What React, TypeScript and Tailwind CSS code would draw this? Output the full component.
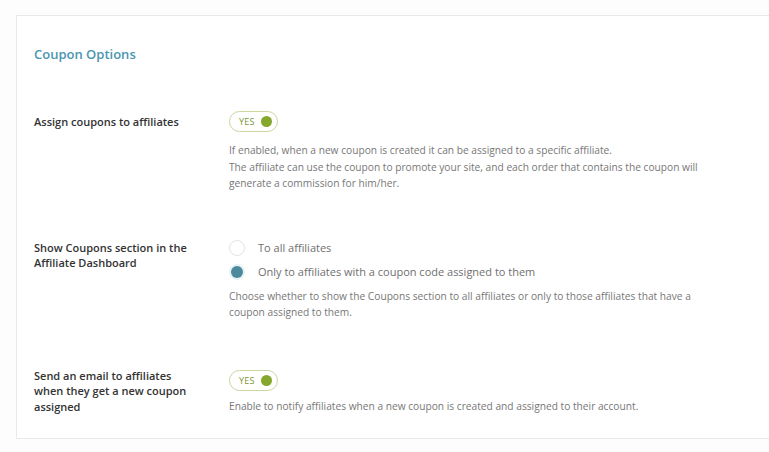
import React from "react";

function Toggle() {
  return (
    <div className="flex h-[21px] w-[49px] items-center justify-between rounded-full border border-[#c9d59f] bg-white pl-[9px] pr-[5px]">
      <span className="text-[9px] font-medium leading-none tracking-wide text-[#7f9538]">YES</span>
      <span className="h-[11px] w-[11px] rounded-full bg-[#84a72c]" />
    </div>
  );
}

function Radio({ checked, label }: { checked?: boolean; label: string }) {
  return (
    <div className="flex items-center gap-[13px]">
      {checked ? (
        <span className="flex h-[16px] w-[16px] items-center justify-center rounded-full bg-[#e8f1f3]">
          <span className="h-[12px] w-[12px] rounded-full bg-[#4b8a9d]" />
        </span>
      ) : (
        <span className="h-[16px] w-[16px] rounded-full border border-[#e3e3e3] bg-white" />
      )}
      <span className="text-[11px] leading-4 text-[#6f6f6f]">{label}</span>
    </div>
  );
}

function Row({
  label,
  children,
  className = "",
}: {
  label: React.ReactNode;
  children: React.ReactNode;
  className?: string;
}) {
  return (
    <div className={`flex ${className}`}>
      <div className="w-[195px] shrink-0 pr-4 text-[11px] font-semibold leading-[15.5px] text-[#333]">
        {label}
      </div>
      <div className="flex-1">{children}</div>
    </div>
  );
}

export default function App() {
  return (
    <div
      className="h-[452px] w-[769px] overflow-hidden bg-[#fdfdfd] pl-4 pt-[15px]"
      style={{ fontFamily: '"Open Sans", "Noto Sans", sans-serif' }}
    >
      <div className="h-[424px] border-y border-l border-[#e9e9e9] bg-white pl-[17px] pt-[28px]">
        <h2 className="text-[13px] font-semibold leading-5 text-[#4b95b0]">Coupon Options</h2>

        <Row label="Assign coupons to affiliates" className="mt-[50px]">
          <div className="-mt-[3px]">
            <Toggle />
          </div>
          <p className="mt-[10px] text-[10.2px] leading-[16.5px] text-[#777]">
            If enabled, when a new coupon is created it can be assigned to a specific affiliate.
            <br />
            The affiliate can use the coupon to promote your site, and each order that contains the coupon will
            <br />
            generate a commission for him/her.
          </p>
        </Row>

        <Row
          label={
            <>
              Show Coupons section in the
              <br />
              Affiliate Dashboard
            </>
          }
          className="mt-[48px]"
        >
          <div className="flex flex-col gap-2">
            <Radio label="To all affiliates" />
            <Radio checked label="Only to affiliates with a coupon code assigned to them" />
          </div>
          <p className="mt-[8px] text-[10.2px] leading-[16.5px] text-[#777]">
            Choose whether to show the Coupons section to all affiliates or only to those affiliates that have a
            <br />
            coupon assigned to them.
          </p>
        </Row>

        <Row
          label={
            <>
              Send an email to affiliates
              <br />
              when they get a new coupon
              <br />
              assigned
            </>
          }
          className="mt-[47px]"
        >
          <div className="mt-[2px]">
            <Toggle />
          </div>
          <p className="mt-[7px] text-[10.2px] leading-[16.5px] text-[#777]">
            Enable to notify affiliates when a new coupon is created and assigned to their account.
          </p>
        </Row>
      </div>
    </div>
  );
}
